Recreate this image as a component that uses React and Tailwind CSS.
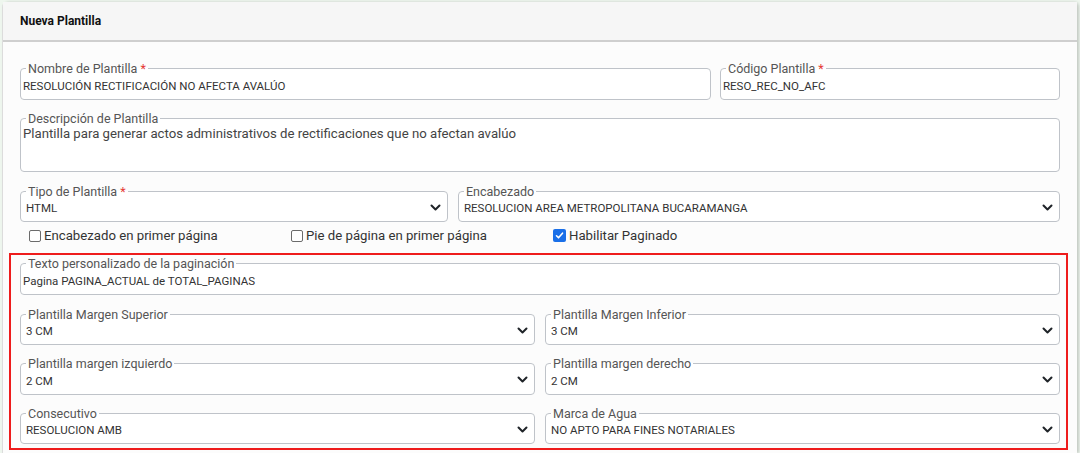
import React from "react";

function Chevron() {
  return (
    <svg width="11" height="7" viewBox="0 0 11 7" className="shrink-0">
      <path d="M1.5 1.5l4 4 4-4" fill="none" stroke="#1f2328" strokeWidth="2" strokeLinecap="round" strokeLinejoin="round" />
    </svg>
  );
}

function Field({ label, required, value, select, className = "" }) {
  return (
    <fieldset className={`min-w-0 rounded-[4px] border border-[#bfc3c9] bg-white px-[2px] ${className}`}>
      <legend className="ml-[3px] px-[2px] text-[12.5px] leading-[15px] text-[#555]">
        {label}
        {required && <span className="text-[#e53935]"> *</span>}
      </legend>
      <div className={`flex h-[22.5px] items-center pb-[3px] text-[11.5px] leading-[16px] text-[#333] ${select ? "pl-[3px] pr-[4px]" : ""}`}>
        <span className="flex-1 truncate">{value}</span>
        {select && <span className="-mt-[2px]"><Chevron /></span>}
      </div>
    </fieldset>
  );
}

function Check({ label, checked }) {
  return (
    <label className="flex w-[262px] items-center gap-[3px] text-[13.2px] text-[#333]">
      {checked ? (
        <span className="flex h-[13px] w-[13px] items-center justify-center rounded-[2px] bg-[#1a6fe8]">
          <svg width="9" height="9" viewBox="0 0 9 9">
            <path d="M1.5 4.8l2 2 4-4.6" fill="none" stroke="white" strokeWidth="1.6" strokeLinecap="round" strokeLinejoin="round" />
          </svg>
        </span>
      ) : (
        <span className="h-[12px] w-[12px] rounded-[2px] border border-[#6b6b6b] bg-white" />
      )}
      {label}
    </label>
  );
}

export default function App() {
  return (
    <div className="h-[453px] w-[1080px] overflow-hidden bg-[#eef6ee] pl-[2px] pr-[3px] pt-[2px] font-['Roboto',sans-serif]">
      <div className="h-full rounded-t-[5px] border-l border-[#dcdcdc] bg-[#fcfcfc] shadow-[2px_0_3px_rgba(0,0,0,0.18)]">
        <div className="flex h-[40px] items-center border-b-2 border-[#cfcfcf] bg-[#f6f6f6] pl-[17px] text-[12px] font-bold text-[#111]">
          Nueva Plantilla
        </div>
        <div className="px-[17px] pt-[19px]">
          <div className="flex gap-[9px]">
            <Field className="w-[691px]" label="Nombre de Plantilla" required value="RESOLUCIÓN RECTIFICACIÓN NO AFECTA AVALÚO" />
            <Field className="flex-1" label="Código Plantilla" required value="RESO_REC_NO_AFC" />
          </div>

          <fieldset className="mt-[11px] min-w-0 rounded-[4px] border border-[#bfc3c9] bg-white px-[2px]">
            <legend className="ml-[3px] px-[2px] text-[12.5px] leading-[15px] text-[#555]">Descripción de Plantilla</legend>
            <div className="h-[45px] text-[13.2px] leading-[15px] text-[#444]">
              Plantilla para generar actos administrativos de rectificaciones que no afectan avalúo
            </div>
          </fieldset>

          <div className="mt-[12px] flex gap-[10px]">
            <Field className="w-[428px]" label="Tipo de Plantilla" required value="HTML" select />
            <Field className="flex-1" label="Encabezado" value="RESOLUCION AREA METROPOLITANA BUCARAMANGA" select />
          </div>

          <div className="mb-[7px] mt-[4px] flex h-[20px] items-center pl-[9px]">
            <Check label="Encabezado en primer página" />
            <Check label="Pie de página en primer página" />
            <Check label="Habilitar Paginado" checked />
          </div>

          <div className="-ml-[11px] -mr-[8px] border-2 border-[#ee1c1c] pb-[4px] pl-[9px] pr-[6px] pt-[1px]">
            <Field label="Texto personalizado de la paginación" value="Pagina PAGINA_ACTUAL de TOTAL_PAGINAS" />
            <div className="mt-[12px] grid grid-cols-2 gap-x-[10px] gap-y-[11px]">
              <Field label="Plantilla Margen Superior" value="3 CM" select />
              <Field label="Plantilla Margen Inferior" value="3 CM" select />
              <Field label="Plantilla margen izquierdo" value="2 CM" select />
              <Field label="Plantilla margen derecho" value="2 CM" select />
              <Field label="Consecutivo" value="RESOLUCION AMB" select />
              <Field label="Marca de Agua" value="NO APTO PARA FINES NOTARIALES" select />
            </div>
          </div>
        </div>
      </div>
    </div>
  );
}
